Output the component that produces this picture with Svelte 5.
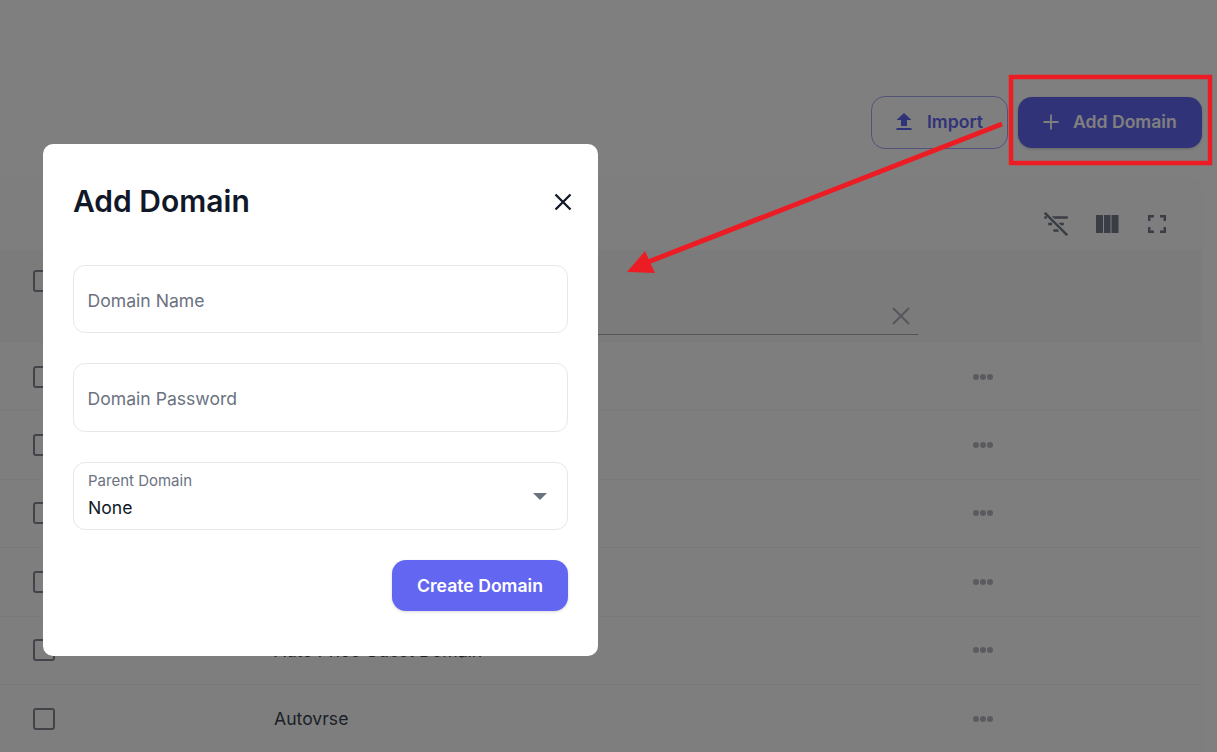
<script>
	const rows = ['', '', '', '', 'Auto Price Guest Domain', 'Autovrse']
</script>

<div class="page">
	<div class="actions">
		<button class="import">
			<svg width="24" height="24" viewBox="0 0 24 24"><path d="M9 16h6v-6h4.500L12 3 4.500 10H9zm-4.500 2h15v2h-15z" fill="currentColor" /></svg>
			Import
		</button>
		<button class="add">
			<svg width="24" height="24" viewBox="0 0 24 24"><path d="M12 4.500v15M4.500 12h15" stroke="currentColor" stroke-width="1.800" fill="none" /></svg>
			Add Domain
		</button>
	</div>

	<div class="card">
		<div class="tools">
			<svg width="24" height="24" viewBox="2.800 2.800 18.400 18.400" fill="#757a8a">
				<path d="M10.830 8H21V6H8.830l2 2zm5 5H18v-2h-4.170l2 2zM14 16.830V18h-4v-2h3.170l.83.83zM3 6h2v2H3zM6 11h3v2H6z" />
				<path d="M3.400 3.400l17.200 17.200" stroke="#757a8a" stroke-width="1.800" fill="none" />
			</svg>
			<svg width="24" height="24" viewBox="0 0 24 24" fill="#757a8a">
				<path d="M1 3h7v18H1zM9 3h6.500v18H9zM16.500 3H23.500v18h-7z" />
			</svg>
			<svg width="24" height="24" viewBox="0 0 24 24" fill="none" stroke="#757a8a" stroke-width="2.400">
				<path d="M4.200 9V4.200H9M15 4.200h4.800V9M19.800 15v4.800H15M9 19.800H4.200V15" />
			</svg>
		</div>

		<div class="head">
			<span class="check"></span>
			<div class="filter">
				<svg width="20" height="20" viewBox="0 0 20 20" fill="none" stroke="#aaaeb8" stroke-width="2"><path d="M2 2l16 16M18 2L2 18" /></svg>
			</div>
		</div>

		{#each rows as name}
			<div class="row">
				<span class="check"></span>
				<span class="name">{name}</span>
				<span class="dots"><i></i><i></i><i></i></span>
			</div>
		{/each}
	</div>
</div>

<div class="backdrop"></div>

<svg class="annotation" width="1217" height="752" viewBox="0 0 1217 752">
	<rect x="1011" y="77" width="199" height="86" fill="none" stroke="#ec1c24" stroke-width="4.500" />
	<path d="M1002 124L648 262" stroke="#ec1c24" stroke-width="5" fill="none" />
	<path d="M627 272L645 251L655 273z" fill="#ec1c24" />
</svg>

<div class="modal">
	<div class="modal-head">
		<h2>Add Domain</h2>
		<svg width="20" height="20" viewBox="0 0 20 20" fill="none" stroke="#111827" stroke-width="2.300"><path d="M2.500 2.500l15 15M17.500 2.500l-15 15" /></svg>
	</div>
	<div class="field">Domain Name</div>
	<div class="field">Domain Password</div>
	<div class="field select">
		<div>
			<label for="parent">Parent Domain</label>
			<div id="parent" class="value">None</div>
		</div>
		<span class="caret"></span>
	</div>
	<div class="modal-foot">
		<button class="create">Create Domain</button>
	</div>
</div>

<style>
	:global(body) {
		margin: 0;
		background: #fff;
		overflow: hidden;
		font-family: Inter, 'Liberation Sans', sans-serif;
	}

	.page {
		width: 1217px;
		height: 752px;
		overflow: hidden;
	}

	.actions {
		display: flex;
		justify-content: flex-end;
		align-items: center;
		gap: 10px;
		padding: 96px 15px 30px 0;
	}

	button {
		display: flex;
		align-items: center;
		font: 600 17.6px Inter, 'Liberation Sans', sans-serif;
		border-radius: 14px;
		cursor: pointer;
		box-sizing: border-box;
	}

	.import {
		width: 137px;
		height: 53px;
		gap: 11px;
		padding: 0 0 2px 20px;
		color: #6366f1;
		background: transparent;
		border: 1px solid #a5a7f5;
	}

	.add {
		width: 184px;
		height: 51px;
		gap: 10px;
		padding: 0 0 2px 21px;
		color: #fff;
		background: #6366f1;
		border: 0;
		box-shadow: 0 1px 3px rgb(0 0 0 / 0.2);
	}

	.card {
		width: 1202px;
		background: #fcfcfc;
		border-radius: 0 16px 0 0;
		box-shadow: 0 0 2px rgb(0 0 0 / 0.05);
	}

	.tools {
		height: 71px;
		display: flex;
		justify-content: flex-end;
		align-items: center;
		gap: 26.500px;
		padding: 19px 33px 0 0;
		box-sizing: border-box;
	}

	.head {
		height: 93px;
		background: #f6f6f6;
		position: relative;
		padding: 20px 0 0 33px;
		box-sizing: border-box;
	}

	.filter {
		position: absolute;
		left: 274px;
		top: 48px;
		width: 644px;
		height: 37px;
		border-bottom: 1px solid #aaa;
		display: flex;
		justify-content: flex-end;
		align-items: center;
		padding-right: 7px;
		box-sizing: border-box;
	}

	.row {
		height: 68.400px;
		display: flex;
		align-items: center;
		padding-left: 33px;
		border-bottom: 1px solid #f2f2f2;
		box-sizing: border-box;
		position: relative;
		color: #374151;
		font-size: 17.6px;
	}

	.check {
		display: block;
		flex: none;
		width: 22px;
		height: 22px;
		border: 2.500px solid #848894;
		border-radius: 3px;
		box-sizing: border-box;
	}

	.name {
		margin-left: 219px;
	}

	.dots {
		position: absolute;
		left: 973px;
		display: flex;
		gap: 1px;
	}

	.dots i {
		width: 6px;
		height: 6px;
		border-radius: 50%;
		background: #b4b6be;
	}

	.backdrop {
		position: fixed;
		inset: 0;
		background: rgb(0 0 0 / 0.5);
	}

	.annotation {
		position: fixed;
		left: 0;
		top: 0;
	}

	.modal {
		position: fixed;
		left: 43px;
		top: 144px;
		width: 555px;
		height: 512px;
		background: #fff;
		border-radius: 10px;
		padding: 0 30px;
		box-sizing: border-box;
		display: flex;
		flex-direction: column;
		gap: 30px;
	}

	.modal-head {
		height: 91px;
		display: flex;
		align-items: flex-start;
		justify-content: space-between;
	}

	h2 {
		margin: 32px 0 0;
		font-size: 30px;
		line-height: 50px;
		font-weight: 600;
		color: #111827;
	}

	.modal-head svg {
		margin: 48px -5px 0 0;
	}

	.field {
		height: 68.400px;
		flex: none;
		border: 1px solid #e5e7eb;
		border-radius: 12px;
		padding: 2px 14px 0 13.500px;
		display: flex;
		align-items: center;
		font-size: 17.6px;
		color: #6b7280;
		box-sizing: border-box;
	}

	.select {
		justify-content: space-between;
		align-items: flex-start;
		padding: 9px 14px 0;
	}

	label {
		display: block;
		font-size: 15px;
		line-height: 18px;
		color: #6b7280;
	}

	.value {
		font-size: 17.6px;
		line-height: 28px;
		margin-top: 4px;
		color: #111827;
	}

	.caret {
		align-self: center;
		width: 0;
		height: 0;
		margin: -8px 6px 0 0;
		border-left: 7px solid transparent;
		border-right: 7px solid transparent;
		border-top: 7px solid #6b7280;
	}

	.modal-foot {
		display: flex;
		justify-content: flex-end;
	}

	.create {
		width: 176px;
		height: 51px;
		padding-bottom: 2px;
		justify-content: center;
		color: #fff;
		background: #6366f1;
		border: 0;
		box-shadow: 0 1px 3px rgb(0 0 0 / 0.15);
	}
</style>
